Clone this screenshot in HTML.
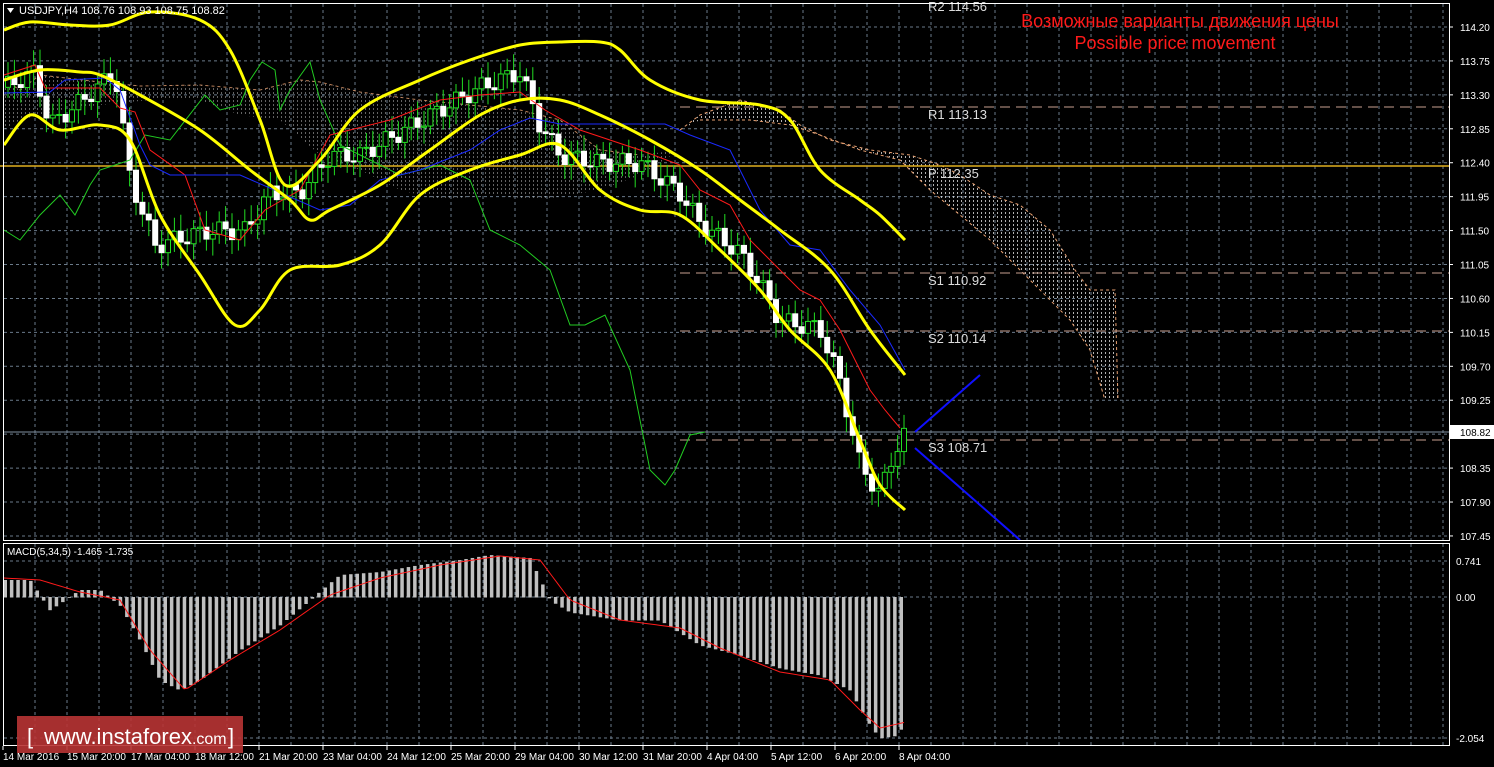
<!DOCTYPE html>
<html><head><meta charset="utf-8"><style>
html,body{margin:0;padding:0;background:#000;width:1494px;height:767px;overflow:hidden}
svg{display:block}
text{font-family:"Liberation Sans","DejaVu Sans",sans-serif}
</style></head><body>
<svg id="s" width="1494" height="767" xmlns="http://www.w3.org/2000/svg">
<defs>
<pattern id="hatch" width="4" height="4" patternUnits="userSpaceOnUse"><rect x="1" y="0" width="1" height="2" fill="#ddd"/></pattern>
</defs>
<g id="grid"></g>
<polygon points="680,130 700,115 740,100 780,110 800,125 830,140 870,150 910,155 940,165 960,175 990,195 1020,205 1050,230 1075,270 1090,290 1115,290 1118,400 1105,400 1090,350 1070,320 1050,300 1020,270 990,240 960,215 930,190 900,160 860,150 820,135 790,125 750,120 700,120" fill="url(#hatch)" opacity="0.8"/>
<polyline points="680,130 700,115 740,100 780,110 800,125 830,140 870,150 910,155 940,165 960,175 990,195 1020,205 1050,230 1075,270 1090,290 1115,290 1118,400" fill="none" stroke="#e8a070" stroke-dasharray="3,3"/>
<polyline points="700,120 750,120 790,125 820,135 860,150 900,160 930,190 960,215 990,240 1020,270 1050,300 1070,320 1090,350 1105,400" fill="none" stroke="#e8a070" stroke-dasharray="3,3"/>
<polygon points="4,80 20,90 40,75 100,82 140,86 200,85 260,90 300,80 320,82 360,92 420,100 470,105 520,110 560,120 600,150 640,155 680,150 640,175 600,190 540,200 490,195 440,200 400,190 360,170 320,155 280,120 240,115 200,100 150,100 100,105 60,110 20,120 4,130" fill="url(#hatch)" opacity="0.45"/>
<polyline points="4,80 20,90 40,75 100,82 140,86 200,85 260,90 300,80 320,82 360,92 420,100 470,105 520,110 560,120 600,150 640,155" fill="none" stroke="#e8a070" stroke-dasharray="3,3" opacity="0.8"/>
<line x1="680" y1="107" x2="1449" y2="107" stroke="#c8a090" stroke-dasharray="10,6"/>
<line x1="0" y1="166" x2="1449" y2="166" stroke="#e0b020" stroke-width="1.5"/>
<line x1="680" y1="273" x2="1449" y2="273" stroke="#c8a090" stroke-dasharray="10,6"/>
<line x1="680" y1="331" x2="1449" y2="331" stroke="#c8a090" stroke-dasharray="10,6"/>
<line x1="680" y1="440" x2="1449" y2="440" stroke="#c8a090" stroke-dasharray="10,6"/>
<line x1="4" y1="432" x2="1449" y2="432" stroke="#8090a0"/>
<g id="candles"></g>
<g id="lines"></g>
<line x1="915" y1="432" x2="980" y2="375" stroke="#1010ff" stroke-width="2"/>
<line x1="915" y1="448" x2="1020" y2="540" stroke="#1010ff" stroke-width="2"/>
<g fill="#ddd" font-size="13" font-family="Liberation Mono,monospace">
<text x="928" y="11">R2 114.56</text><text x="928" y="119">R1 113.13</text><text x="928" y="178">P 112.35</text>
<text x="928" y="285">S1 110.92</text><text x="928" y="343">S2 110.14</text><text x="928" y="452">S3 108.71</text>
</g>
<text x="1180" y="27" fill="#ff1a1a" font-size="18" text-anchor="middle">Возможные варианты движения цены</text>
<text x="1175" y="49" fill="#ff1a1a" font-size="18" text-anchor="middle">Possible price movement</text>
<path d="M7,8 L14,8 L10.5,13Z" fill="#fff"/>
<text x="19" y="14" fill="#fff" font-size="11">USDJPY,H4  108.76 108.93 108.75 108.82</text>
<g id="macd"></g>
<text x="7" y="555" fill="#fff" font-size="10">MACD(5,34,5) -1.465 -1.735</text>
<rect x="3.5" y="3.5" width="1446" height="537" fill="none" stroke="#fff"/>
<rect x="3.5" y="543.5" width="1446" height="202" fill="none" stroke="#fff"/>
<g id="axis" fill="#fff" font-size="10"></g>
<rect x="1450" y="425" width="44" height="14" fill="#fff"/>
<text x="1460" y="436" font-size="10" fill="#000">108.82</text>
<rect x="17" y="716" width="226" height="37" fill="#b83434" opacity="0.9"/>
<text x="27" y="744" fill="#fff" font-size="22">[</text>
<text x="44" y="744" fill="#fff" font-size="22">www.instaforex<tspan font-size="16">.com</tspan></text>
<text x="228" y="744" fill="#fff" font-size="22">]</text>
</svg>
<script>
var NS="http://www.w3.org/2000/svg";
function el(p,t,a,txt){var e=document.createElementNS(NS,t);for(var k in a)e.setAttribute(k,a[k]);if(txt)e.textContent=txt;document.getElementById(p).appendChild(e);return e;}
function yp(p){return 27+(114.2-p)*75.4;}
function smooth(str){var a=str.trim().split(/\s+/).map(function(s){return s.split(",").map(Number);});var d="M"+a[0][0]+","+a[0][1];
for(var i=0;i<a.length-1;i++){var p0=a[Math.max(0,i-1)],p1=a[i],p2=a[i+1],p3=a[Math.min(a.length-1,i+2)];
d+=" C"+(p1[0]+(p2[0]-p0[0])/6)+","+(p1[1]+(p2[1]-p0[1])/6)+" "+(p2[0]-(p3[0]-p1[0])/6)+","+(p2[1]-(p3[1]-p1[1])/6)+" "+p2[0]+","+p2[1];}return d;}
function line(pts,col,w,sm){if(sm)el("lines","path",{d:smooth(pts),fill:"none",stroke:col,"stroke-width":w});else el("lines","polyline",{points:pts,fill:"none",stroke:col,"stroke-width":w});}
for(var x=35;x<1449;x+=32){el("grid","line",{x1:x,y1:4,x2:x,y2:540,stroke:"#6a7a8a","stroke-dasharray":"3,3"});el("grid","line",{x1:x,y1:544,x2:x,y2:745,stroke:"#6a7a8a","stroke-dasharray":"3,3"});}
var labs=["114.20","113.75","113.30","112.85","112.40","111.95","111.50","111.05","110.60","110.15","109.70","109.25","108.80","108.35","107.90","107.45"];
for(var i=0;i<labs.length;i++){var y=yp(parseFloat(labs[i]));el("grid","line",{x1:4,y1:y,x2:1449,y2:y,stroke:"#6a7a8a","stroke-dasharray":"3,3"});if(labs[i]!="108.80"){el("axis","text",{x:1460,y:y+4},labs[i]);el("axis","line",{x1:1449,y1:y,x2:1453,y2:y,stroke:"#fff"});}}
[561,597,738].forEach(function(y){el("grid","line",{x1:4,y1:y,x2:1449,y2:y,stroke:"#6a7a8a","stroke-dasharray":"3,3"});});
el("axis","text",{x:1456,y:565},"0.741");el("axis","text",{x:1456,y:601},"0.00");el("axis","text",{x:1456,y:742},"-2.054");
var tl=["14 Mar 2016","15 Mar 20:00","17 Mar 04:00","18 Mar 12:00","21 Mar 20:00","23 Mar 04:00","24 Mar 12:00","25 Mar 20:00","29 Mar 04:00","30 Mar 12:00","31 Mar 20:00","4 Apr 04:00","5 Apr 12:00","6 Apr 20:00","8 Apr 04:00"];
for(var i=0;i<tl.length;i++){var x=3+64*i;el("axis","text",{x:x,y:760},tl[i]);el("axis","line",{x1:x,y1:746,x2:x,y2:750,stroke:"#fff"});}
var P=[[4,113.4],[35,113.6],[50,112.9],[80,113.2],[115,113.6],[130,112.2],[155,111.3],[180,111.4],[210,111.5],[245,111.5],[270,112.0],[300,112.0],[330,112.5],[360,112.5],[400,112.8],[440,113.1],[480,113.4],[520,113.6],[540,112.9],[560,112.5],[600,112.4],[640,112.4],[680,112.0],[700,111.6],[740,111.2],[760,110.8],[780,110.3],[820,110.2],[840,109.5],[860,108.4],[880,108.0],[895,108.6],[906,108.82]];
function interp(A,x){for(var i=1;i<A.length;i++)if(x<=A[i][0]){var a=A[i-1],b=A[i];return a[1]+(b[1]-a[1])*(x-a[0])/(b[0]-a[0]);}return A[A.length-1][1];}
var prev=113.4,k=0;
for(var x=8;x<=906;x+=6.4){k++;var c=interp(P,x)+0.12*Math.sin(k*1.7);var o=prev;prev=c;var hi=Math.max(o,c)+0.1+0.12*Math.abs(Math.sin(k*2.3)),lo=Math.min(o,c)-0.1-0.12*Math.abs(Math.cos(k*1.9));
el("candles","line",{x1:x,y1:yp(hi),x2:x,y2:yp(lo),stroke:"#22dd22"});
var t=yp(Math.max(o,c)),h=Math.max(1,Math.abs(yp(o)-yp(c)));
if(c<o)el("candles","rect",{x:x-2.5,y:t,width:5,height:h,fill:"#fff",stroke:"#fff"});else el("candles","rect",{x:x-2.5,y:t,width:5,height:h,fill:"#000",stroke:"#22dd22"});}
line("4,230 20,240 40,215 60,195 75,215 90,185 100,170 130,160 145,135 170,140 205,95 220,110 240,105 250,80 262,62 275,70 280,110 290,90 310,62 320,100 340,145 370,160 400,175 440,165 470,180 490,230 520,245 550,270 570,325 585,325 605,315 630,370 650,470 665,485 675,470 690,435 705,432","#22cc22",1,false);
line("4,75 35,65 45,88 100,88 120,108 135,112 150,150 185,175 205,230 240,240 265,210 300,190 330,135 350,130 390,120 440,100 480,95 520,92 545,110 580,130 640,150 680,165 700,190 730,205 750,240 780,270 800,290 820,300 840,330 870,390 885,410 900,428","#ff1a1a",1,false);
line("4,93 50,92 65,80 105,78 120,90 140,145 150,165 170,175 240,175 320,210 350,205 380,180 420,170 470,150 500,130 530,118 560,124 665,124 690,135 730,150 760,210 790,245 820,250 850,290 880,325 905,370","#1a2aff",1,false);
line("4,30 30,22 70,25 110,25 150,12 200,20 230,50 260,120 285,185 320,160 360,110 420,80 470,60 520,45 560,42 600,42 620,50 650,80 700,100 760,105 790,120 820,170 860,200 880,215 905,240","#ffff00",3,true);
line("4,80 40,70 80,72 100,75 140,95 200,130 250,170 290,200 310,220 330,210 380,185 430,150 480,115 520,100 560,100 600,115 650,140 700,170 740,200 780,230 830,270 870,330 905,375","#ffff00",3,true);
line("4,145 30,115 60,130 100,125 130,140 160,215 200,275 235,325 260,310 290,270 340,265 380,245 420,195 470,170 520,155 560,145 600,190 640,210 680,215 720,250 760,290 790,330 830,370 860,440 880,485 905,510","#ffff00",3,true);
var M=[[4,580],[30,580],[50,610],[80,590],[100,590],[120,605],[140,640],[160,680],[180,690],[200,680],[240,650],[280,625],[310,600],[340,575],[380,572],[420,565],[460,560],[490,555],[530,558],[550,600],[570,612],[620,620],[660,620],[700,645],[740,655],[780,668],[820,675],[850,690],[870,725],[880,738],[900,735],[906,700]];
var S=[[4,578],[40,580],[80,592],[120,600],[150,650],[185,690],[230,660],[280,630],[330,595],[380,578],[440,565],[500,556],[540,560],[570,600],[620,620],[680,628],[720,648],[780,672],[830,680],[860,710],[880,728],[906,722]];
for(var x=5;x<=906;x+=6.4){var v=interp(M,x);el("macd","rect",{x:x-1.5,y:Math.min(v,597),width:3.5,height:Math.abs(v-597)+0.5,fill:"#c0c0c0"});}
var pts=[];for(var x=4;x<=906;x+=4)pts.push(x+","+interp(S,x));el("macd","polyline",{points:pts.join(" "),fill:"none",stroke:"#ff1a1a"});
</script>
</body></html>
